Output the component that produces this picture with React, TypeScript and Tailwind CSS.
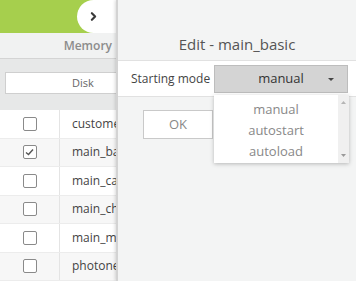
import { ChevronRight } from 'lucide-react';

const rows = [
  { name: 'customer', checked: false },
  { name: 'main_basic', checked: true },
  { name: 'main_calc', checked: false },
  { name: 'main_chat', checked: false },
  { name: 'main_music', checked: false },
  { name: 'photoneo', checked: false },
];

const options = ['manual', 'autostart', 'autoload'];

function Checkbox({ checked }: { checked: boolean }) {
  return (
    <div className="w-[14px] h-[14px] rounded-[2px] border border-[#8a8a8a] bg-white flex items-center justify-center">
      {checked && (
        <svg width="9" height="8" viewBox="0 0 9 8">
          <path d="M1 4.5 L3.5 6.5 L8 1.5" fill="none" stroke="#555" strokeWidth="1.4" />
        </svg>
      )}
    </div>
  );
}

export default function App() {
  return (
    <div
      className="relative w-[356px] h-[281px] overflow-hidden bg-white text-[#444]"
      style={{ fontFamily: '"Open Sans", "Noto Sans", sans-serif' }}
    >
      {/* page underneath */}
      <div className="flex flex-col w-full">
        <div className="h-[33px] bg-[#a6cf4d] flex">
          <div className="ml-[77px] w-[80px] h-[33px] bg-white rounded-l-full flex items-center pl-[10px]">
            <ChevronRight size={13} strokeWidth={4} className="text-[#3a3a3a]" />
          </div>
        </div>
        <div className="h-[26px] bg-[#f1f2f2] border-b border-[#d4d4d4] flex">
          <div className="w-[112px] text-right text-[12px] leading-[26px] font-semibold text-[#8c8c8c]">Memory</div>
        </div>
        <div className="h-[51px] bg-[#e7e8e8] pt-[13px] pl-[5px]">
          <div className="w-[156px] h-[22px] bg-white border border-[#cfcfcf] text-center text-[11px] leading-[20px] text-[#666]">
            Disk
          </div>
        </div>
        {rows.map((r, i) => (
          <div
            key={r.name}
            className={`h-[28.5px] flex border-b border-[#ececec] ${i % 2 === 1 ? 'bg-[#f7f7f7]' : 'bg-white'}`}
          >
            <div className="w-[60px] border-r border-[#e4e4e4] flex items-center justify-center">
              <Checkbox checked={r.checked} />
            </div>
            <div className="pl-[12px] text-[12px] flex items-center text-[#444]">{r.name}</div>
          </div>
        ))}
      </div>

      {/* side panel */}
      <div className="absolute left-[116px] top-0 w-[240px] h-[281px] bg-[#f3f4f4] border-l-2 border-[#d3d3d3] shadow-[-1px_0_3px_rgba(0,0,0,0.15)]">
        <div className="h-[60px] pt-[33px] text-center text-[15px] leading-[22px] text-[#555]">Edit - main_basic</div>
        <div className="h-[37px] bg-white border-t border-b border-[#e1e1e1] flex items-center pl-[13px]">
          <div className="w-[83px] whitespace-nowrap text-[12px] text-[#444]">Starting mode</div>
          <div className="w-[134px] h-[28px] bg-[#d4d4d4] border border-[#bdbdbd] flex items-center relative">
            <div className="flex-1 text-center text-[13px] text-[#333]">manual</div>
            <svg className="absolute right-[13px] top-[12px]" width="6" height="3" viewBox="0 0 6 3">
              <path d="M0 0 L6 0 L3 3 Z" fill="#444" />
            </svg>
          </div>
        </div>
        <div className="pt-[13px] pl-[25px]">
          <div className="w-[70px] h-[29px] bg-white border border-[#c9c9c9] text-center text-[13px] leading-[27px] text-[#888]">
            OK
          </div>
        </div>

        {/* dropdown */}
        <div className="absolute left-[96px] top-[95px] w-[135px] h-[68px] bg-white shadow-[0_1px_4px_rgba(0,0,0,0.25)] flex">
          <div className="flex-1 pt-[4px]">
            {options.map((o) => (
              <div key={o} className="h-[21px] text-center text-[13px] leading-[21px] text-[#888]">
                {o}
              </div>
            ))}
          </div>
          <div className="w-[11px] bg-[#f0f0f0] flex flex-col justify-between items-center py-[6px]">
            <svg width="5" height="3" viewBox="0 0 5 3">
              <path d="M0 3 L5 3 L2.5 0 Z" fill="#b5b5b5" />
            </svg>
            <svg width="5" height="3" viewBox="0 0 5 3">
              <path d="M0 0 L5 0 L2.5 3 Z" fill="#9a9a9a" />
            </svg>
          </div>
        </div>
      </div>
    </div>
  );
}
